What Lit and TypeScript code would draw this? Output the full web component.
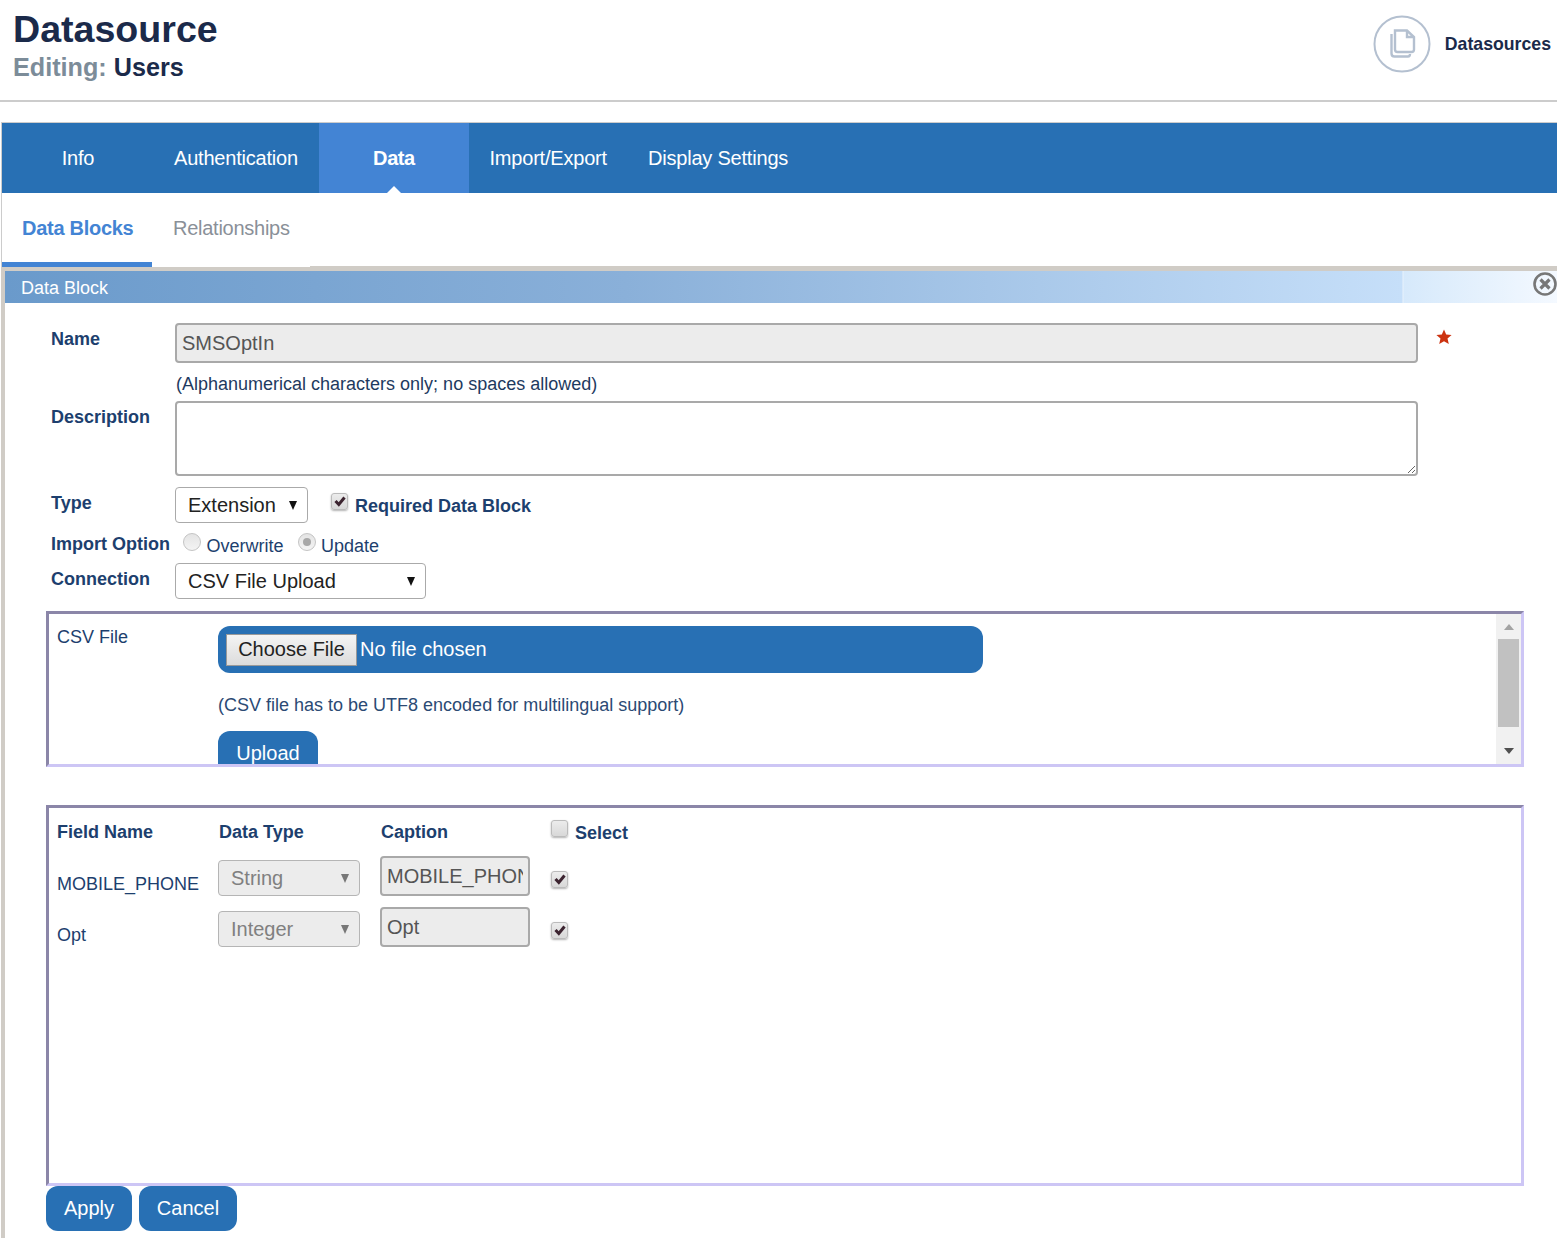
import { LitElement, html, css, svg } from 'lit';
import { customElement, state } from 'lit/decorators.js';

const TABS = ['Info', 'Authentication', 'Data', 'Import/Export', 'Display Settings'];

const FIELDS = [
  { name: 'MOBILE_PHONE', type: 'String', caption: 'MOBILE_PHONE' },
  { name: 'Opt', type: 'Integer', caption: 'Opt' },
];

const checkMark = svg`<path d="M4.5 8 L7.8 11.5 L13.5 4.5" fill="none" stroke="#3c2430" stroke-width="3" />`;

@customElement('app-root')
export class AppRoot extends LitElement {
  @state() private activeTab = 'Data';

  static styles = css`
    :host {
      display: block;
      width: 1557px;
      height: 1238px;
      overflow: hidden;
      background: #fff;
      font-family: 'Liberation Sans', Arial, sans-serif;
      color: #1d3f6e;
    }
    .top {
      height: 100px;
      border-bottom: 2px solid #ccc;
      display: flex;
      justify-content: space-between;
      box-sizing: content-box;
    }
    .titles {
      padding: 9px 0 0 13px;
    }
    h1 {
      margin: 0;
      font-size: 37.6px;
      line-height: 41px;
      font-weight: bold;
      color: #1b2a4a;
    }
    .subtitle {
      font-size: 25.2px;
      line-height: 34px;
      font-weight: bold;
      color: #1b2a4a;
    }
    .subtitle span {
      color: #7c8c99;
    }
    .crumb {
      display: flex;
      align-items: center;
      gap: 14px;
      padding: 15px 6px 0 0;
      height: 58px;
      font-size: 17.7px;
      font-weight: bold;
      color: #1b2a4a;
    }
    .nav {
      margin: 20px 0 0 1px;
      border-top: 1px solid #ccc;
      border-left: 1px solid #ccc;
      display: flex;
      height: 70px;
      background: #2870b4;
    }
    .tab {
      position: relative;
      min-width: 150px;
      padding: 0 20.5px;
      box-sizing: border-box;
      display: flex;
      align-items: center;
      justify-content: center;
      font-size: 20px;
      color: #fff;
      letter-spacing: -0.2px;
    }
    .tab.first {
      min-width: 152px;
    }
    .tab:nth-child(2) {
      padding: 0 21px 0 20px;
    }
    .tab.active {
      background: #4384d4;
      font-weight: bold;
      letter-spacing: -0.4px;
    }
    .tab.active::after {
      content: '';
      position: absolute;
      left: 50%;
      bottom: 0;
      margin-left: -7px;
      border: 7px solid transparent;
      border-top: 0;
      border-bottom-color: #fff;
    }
    .subnav {
      margin-left: 1px;
      border-left: 1px solid #ccc;
      display: flex;
      height: 74px;
      position: relative;
      font-size: 20px;
    }
    .subtab {
      width: 150px;
      box-sizing: border-box;
      padding: 23px 0 0 21px;
      line-height: 24px;
      color: #8a9098;
      letter-spacing: -0.26px;
    }
    .subtab.active {
      padding-left: 20px;
      color: #4384d4;
      font-weight: bold;
      letter-spacing: -0.28px;
      border-bottom: 5px solid #4384d4;
    }
    .subnav-rest {
      flex: 1;
      margin: 73px 0 -3px 8px;
      background: #d0ccc6;
    }
    .panel {
      margin-left: 1px;
      border-left: 4px solid #d0ccc6;
      position: relative;
      height: 972px;
    }
    .panel-top {
      height: 4px;
      background: #d0ccc6;
    }
    .bar {
      height: 32px;
      line-height: 34px;
      padding-left: 16px;
      font-size: 18px;
      color: #fff;
      background: linear-gradient(
        90deg,
        #6a9acb 0,
        #8ab0d9 40%,
        #c6dff9 1397px,
        #e8f2fc 1398px,
        #d6e9fb 1399px,
        #f4f9ff 100%
      );
    }
    .close {
      position: absolute;
      top: 4px;
      right: -1px;
      width: 26px;
      height: 26px;
    }
    .body {
      padding: 20px 33px 0 41px;
    }
    .row {
      display: flex;
      align-items: flex-start;
      padding-left: 5px;
    }
    .label {
      width: 124px;
      flex: none;
      font-size: 18px;
      font-weight: bold;
      line-height: 20px;
      padding-top: 6px;
    }
    .input {
      display: block;
      box-sizing: border-box;
      border: 2px solid #a9a9a9;
      border-radius: 4px;
      font: 20px 'Liberation Sans', Arial, sans-serif;
      color: #555;
      background: #ececec;
      padding: 0 5px;
      margin: 0;
      outline: none;
      opacity: 1;
    }
    .name {
      width: 1243px;
      height: 40px;
    }
    .star {
      margin: 6px 0 0 18px;
    }
    .hint {
      margin: 11px 0 0 130px;
      font-size: 18px;
      line-height: 20px;
      color: #1e3a5f;
    }
    .desc {
      width: 1243px;
      height: 75px;
      background: #fff;
    }
    .select {
      box-sizing: border-box;
      height: 36px;
      border: 1px solid #aaa;
      border-radius: 4px;
      padding: 0 10px 0 12px;
      display: flex;
      align-items: center;
      justify-content: space-between;
      font-size: 20px;
      color: #222;
      background: #fff;
    }
    .select.off {
      background: #ececec;
      color: #808080;
      border-color: #b5b5b5;
    }
    .arrow {
      width: 0;
      height: 0;
      border: 4.5px solid transparent;
      border-top: 9px solid #111;
      border-bottom: 0;
    }
    .select.off .arrow {
      border-top-color: #777;
    }
    .check {
      display: inline-block;
      width: 17px;
      height: 17px;
      flex: none;
      box-sizing: border-box;
      border-radius: 3px;
      border: 1px solid #bbb;
      background: linear-gradient(#ececec, #d8d8d8);
      box-shadow: 0 1px 2px rgba(0, 0, 0, 0.3);
    }
    .check svg {
      display: block;
      margin: -1px;
    }
    .radio {
      width: 18px;
      height: 18px;
      flex: none;
      box-sizing: border-box;
      border-radius: 50%;
      border: 1px solid #c4c4c4;
      background: linear-gradient(#e4e4e4, #f4f4f4);
      display: flex;
      align-items: center;
      justify-content: center;
    }
    .radio.on::after {
      content: '';
      width: 8px;
      height: 8px;
      border-radius: 50%;
      background: #a8a8a8;
    }
    .type-row {
      margin-top: 11px;
      height: 36px;
    }
    .required {
      display: flex;
      margin-left: 23px;
      font-size: 18px;
      font-weight: bold;
      line-height: 20px;
    }
    .required .check {
      margin: 6px 7px 0 0;
    }
    .required span:last-child {
      padding-top: 9px;
    }
    .import-row {
      height: 40px;
      padding-top: 5px;
      box-sizing: border-box;
    }
    .option {
      display: flex;
      font-size: 18px;
      line-height: 20px;
      margin-right: 14px;
    }
    .option .radio {
      margin: 5px 5.5px 0 0;
    }
    .option span:last-child {
      padding-top: 8px;
    }
    .options {
      display: flex;
      margin-left: 8px;
    }
    .box {
      box-sizing: border-box;
      border: 3px solid;
      border-color: #8b86a8 #cdc6f5 #cdc6f5 #8b86a8;
      display: flex;
    }
    .csv {
      margin-top: 12px;
      height: 156px;
    }
    .csv-content {
      flex: 1;
      overflow: hidden;
      display: flex;
      font-size: 18px;
      line-height: 20px;
      padding: 12px 0 0 8px;
    }
    .csv-label {
      width: 161px;
      flex: none;
      padding-top: 1px;
    }
    .file-bar {
      width: 765px;
      height: 47px;
      box-sizing: border-box;
      padding-left: 8px;
      border-radius: 12px;
      background: #2870b4;
      display: flex;
      align-items: center;
      gap: 3px;
      color: #fff;
      font-size: 20px;
    }
    .file-bar span {
      margin-top: -1px;
    }
    .file-btn {
      box-sizing: border-box;
      width: 131px;
      height: 32px;
      border: 1px solid #999;
      background: linear-gradient(#f4f4f4, #dcdcdc);
      color: #222;
      font: 20px 'Liberation Sans', Arial, sans-serif;
      padding: 0 0 1px;
    }
    .csv-hint {
      margin: 22px 0 16px;
      color: #2b4a74;
    }
    .btn {
      display: inline-block;
      box-sizing: border-box;
      height: 45px;
      border: 0;
      border-radius: 12px;
      background: #2870b4;
      color: #fff;
      font: 20px/45px 'Liberation Sans', Arial, sans-serif;
      padding: 0;
      text-align: center;
      margin: 0;
    }
    .scrollbar {
      width: 25px;
      flex: none;
      background: #f1f1f1;
      display: flex;
      flex-direction: column;
      align-items: center;
    }
    .scroll-up {
      margin-top: 10px;
      border: 5.5px solid transparent;
      border-top: 0;
      border-bottom: 6px solid #a3a3a3;
    }
    .thumb {
      width: 21px;
      height: 88px;
      margin-top: 9px;
      background: #c1c1c1;
    }
    .scroll-down {
      margin-top: 21px;
      border: 5.5px solid transparent;
      border-bottom: 0;
      border-top: 6px solid #505050;
    }
    .fields {
      margin-top: 38px;
      height: 381px;
      display: block;
      padding: 9px 0 0 8px;
    }
    .grid {
      display: grid;
      grid-template-columns: 161px 162px 171px auto;
      justify-content: start;
      font-size: 18px;
      line-height: 20px;
    }
    .head {
      font-weight: bold;
      padding: 5px 0 0 0;
      height: 39px;
      box-sizing: border-box;
    }
    .head.data {
      padding-left: 1px;
    }
    .head.select-all {
      display: flex;
      padding-top: 0;
    }
    .head.select-all .check {
      margin: 3px 7px 0 0;
    }
    .head.select-all span:last-child {
      padding-top: 6px;
    }
    .cell {
      height: 51px;
      box-sizing: border-box;
    }
    .cell.name-cell {
      padding-top: 18px;
    }
    .cell.type-cell {
      padding-top: 4px;
    }
    .cell.type-cell .select {
      width: 142px;
    }
    .caption {
      width: 150px;
      height: 40px;
    }
    .cell.check-cell {
      padding-top: 15px;
    }
    .actions {
      display: flex;
      gap: 7px;
    }
    .apply {
      width: 86px;
    }
    .cancel {
      width: 98px;
    }
  `;

  private check(checked: boolean) {
    return html`<span class="check"
      >${checked
        ? html`<svg width="17" height="17" viewBox="0 0 17 17">${checkMark}</svg>`
        : null}</span
    >`;
  }

  render() {
    return html`
      <header class="top">
        <div class="titles">
          <h1>Datasource</h1>
          <div class="subtitle"><span>Editing:</span> Users</div>
        </div>
        <div class="crumb">
          <svg width="58" height="58" viewBox="0 0 58 58" fill="none" stroke="#b4c0d0">
            <circle cx="29" cy="29" r="27.5" stroke-width="2" />
            <path d="M18.5 19 V38.5 Q18.5 41.5 21.5 41.5 H35 Q37 41.5 37 39" stroke-width="2.4" />
            <path d="M22 15.5 H34 L41 22 V34.5 Q41 37 38.5 37 H24.5 Q22 37 22 34.5 Z M34 15.5 V22 H41" stroke-width="2.4" />
          </svg>
          <span>Datasources</span>
        </div>
      </header>

      <nav class="nav">
        ${TABS.map(
          (t, i) => html`<div class="tab ${t === this.activeTab ? 'active' : ''} ${i === 0 ? 'first' : ''}">${t}</div>`
        )}
      </nav>

      <div class="subnav">
        <div class="subtab active">Data Blocks</div>
        <div class="subtab">Relationships</div>
        <div class="subnav-rest"></div>
      </div>

      <section class="panel">
        <div class="panel-top"></div>
        <div class="bar">Data Block</div>
        <svg class="close" viewBox="0 0 26 26" fill="none" stroke="#777">
          <circle cx="13" cy="13" r="10.5" stroke-width="2.6" />
          <path d="M8.5 8.5 L17.5 17.5 M17.5 8.5 L8.5 17.5" stroke-width="3.2" />
        </svg>

        <div class="body">
          <div class="row">
            <div class="label">Name</div>
            <input class="input name" disabled value="SMSOptIn" />
            <svg class="star" width="16" height="16" viewBox="0 0 16 16">
              <polygon points="8,0.5 10.2,5.6 15.6,6 11.5,9.6 12.8,15 8,12.2 3.2,15 4.5,9.6 0.4,6 5.8,5.6" fill="#cc3311" />
            </svg>
          </div>
          <div class="hint">(Alphanumerical characters only; no spaces allowed)</div>
          <div class="row" style="margin-top:7px">
            <div class="label">Description</div>
            <textarea class="input desc"></textarea>
          </div>
          <div class="row type-row">
            <div class="label">Type</div>
            <div class="select" style="width:133px"><span>Extension</span><i class="arrow"></i></div>
            <div class="required">${this.check(true)}<span>Required Data Block</span></div>
          </div>
          <div class="row import-row">
            <div class="label">Import Option</div>
            <div class="options">
              <div class="option"><i class="radio"></i><span>Overwrite</span></div>
              <div class="option"><i class="radio on"></i><span>Update</span></div>
            </div>
          </div>
          <div class="row">
            <div class="label">Connection</div>
            <div class="select" style="width:251px"><span>CSV File Upload</span><i class="arrow"></i></div>
          </div>

          <div class="box csv">
            <div class="csv-content">
              <div class="csv-label">CSV File</div>
              <div>
                <div class="file-bar"><button class="file-btn">Choose File</button><span>No file chosen</span></div>
                <div class="csv-hint">(CSV file has to be UTF8 encoded for multilingual support)</div>
                <button class="btn" style="width:100px">Upload</button>
              </div>
            </div>
            <div class="scrollbar">
              <i class="scroll-up"></i>
              <div class="thumb"></div>
              <i class="scroll-down"></i>
            </div>
          </div>

          <div class="box fields">
            <div class="grid">
              <div class="head">Field Name</div>
              <div class="head data">Data Type</div>
              <div class="head data">Caption</div>
              <div class="head select-all">${this.check(false)}<span>Select</span></div>
              ${FIELDS.map(
                (f) => html`
                  <div class="cell name-cell">${f.name}</div>
                  <div class="cell type-cell">
                    <div class="select off"><span>${f.type}</span><i class="arrow"></i></div>
                  </div>
                  <div class="cell"><input class="input caption" disabled .value=${f.caption} /></div>
                  <div class="cell check-cell">${this.check(true)}</div>
                `
              )}
            </div>
          </div>

          <div class="actions">
            <button class="btn apply">Apply</button>
            <button class="btn cancel">Cancel</button>
          </div>
        </div>
      </section>
    `;
  }
}
